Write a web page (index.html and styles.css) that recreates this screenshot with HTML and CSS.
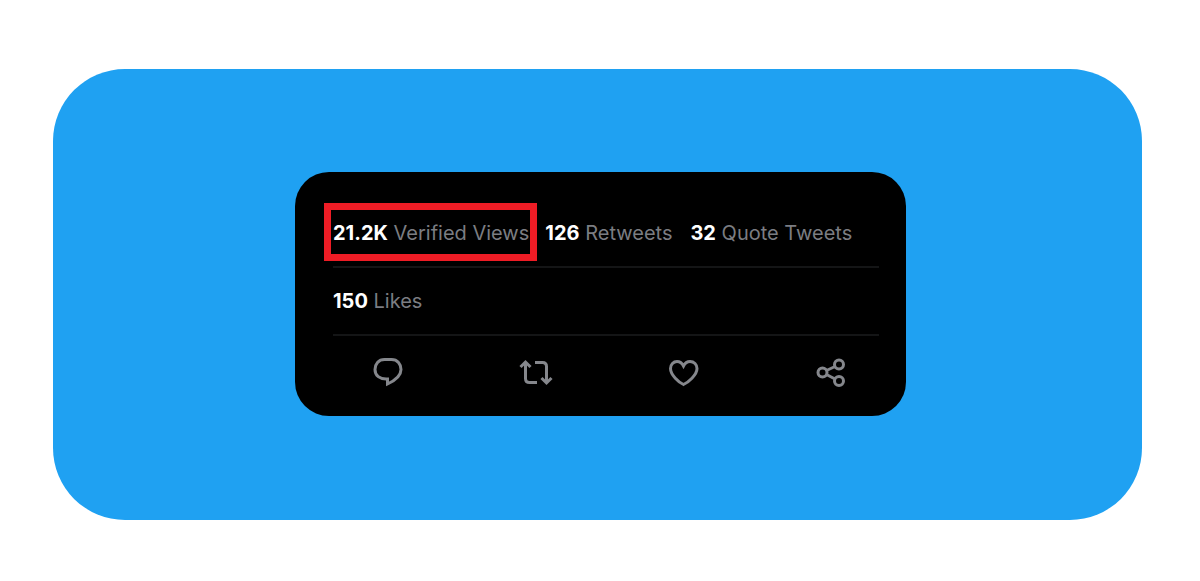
FILE: index.html
```
<!DOCTYPE html>
<html lang="en">
<head>
  <meta charset="UTF-8">
  <meta name="viewport" content="width=device-width, initial-scale=1.0">
  <title>Verified Views</title>
  <link rel="stylesheet" href="styles.css">
</head>
<body>
  <main class="backdrop">
    <article class="card">
      <div class="stats">
        <a class="stat highlight" href="#views"><strong>21.2K</strong> Verified Views</a>
        <a class="stat" href="#retweets"><strong>126</strong> Retweets</a>
        <a class="stat" href="#quotes"><strong>32</strong> Quote Tweets</a>
      </div>
      <div class="stats likes">
        <a class="stat" href="#likes"><strong>150</strong> Likes</a>
      </div>
      <div class="actions">
        <button class="action" type="button" aria-label="Reply">
          <svg class="icon" viewBox="0 0 36 36">
            <path d="M14.500 5.500H21.500C27.500 5.500 31 10 31 15.500C31 22 25 26.500 17.500 30V25C9.500 25.500 5 21.500 5 15.500C5 10 8.500 5.500 14.500 5.500Z"/>
          </svg>
        </button>
        <button class="action" type="button" aria-label="Retweet">
          <svg class="icon" viewBox="0 0 36 36">
            <path d="M2.500 13L7.500 8L12.500 13M7.500 8.500V24.500Q7.500 28.500 11.500 28.500H19M17 8.500H24.500Q28.500 8.500 28.500 12.500V28.500M23.500 24L28.500 29L33.500 24"/>
          </svg>
        </button>
        <button class="action" type="button" aria-label="Like">
          <svg class="icon" viewBox="0 0 36 36">
            <path d="M17.500 30.500C13 28.500 4.500 21 4.500 14.500C4.500 10.500 7.500 7.500 11 7.500C14 7.500 16 9 17.500 12C19 9 21 7.500 24 7.500C28 7.500 31 10.500 31 14.500C31 21 22 28.500 17.500 30.500Z"/>
          </svg>
        </button>
        <button class="action" type="button" aria-label="Share">
          <svg class="icon" viewBox="0 0 36 36">
            <circle cx="8.500" cy="18.500" r="4.500"/>
            <circle cx="25" cy="10.500" r="4.500"/>
            <circle cx="25" cy="27" r="4.500"/>
            <path d="M12.500 16.500L21 12.500M12.500 20.500L21 25"/>
          </svg>
        </button>
      </div>
    </article>
  </main>
</body>
</html>
```
FILE: styles.css
```
* {
  box-sizing: border-box;
}
body {
  margin: 0;
  padding: 69px 58px 61px 53px;
  background: #fff;
  font-family: Inter, Arial, sans-serif;
  font-size: 20px;
}
.backdrop {
  display: flex;
  justify-content: center;
  padding: 103px 0 104px 6px;
  border-radius: 72px;
  background: #1fa1f2;
}
.card {
  width: 56%;
  min-width: 611px;
  padding-top: 31px;
  border-radius: 34px;
  background: #000;
}
.stats {
  display: flex;
  align-items: baseline;
  margin: 0 27px 0 38px;
  padding-bottom: 5px;
  border-bottom: 2px solid #141516;
}
.stat {
  color: #7b7d82;
  line-height: 42px;
  text-decoration: none;
  white-space: nowrap;
}
.stat + .stat {
  margin-left: 18px;
}
.stat strong {
  color: #fff;
  font-weight: 700;
}
.stats .highlight {
  margin-left: -9px;
  padding: 2px 1px 0 2px;
  border: 7px solid #ee1c25;
}
.stats .highlight + .stat {
  margin-left: 8px;
}
.likes {
  padding: 12px 0;
}
.actions {
  display: grid;
  grid-template-columns: repeat(4, 1fr);
  padding: 18px 0 26px 19px;
}
.action {
  display: flex;
  justify-content: center;
  padding: 0;
  border: none;
  background: none;
  cursor: pointer;
}
.icon {
  width: 36px;
  height: 36px;
  fill: none;
  stroke: #85878c;
  stroke-width: 3;
}
```
